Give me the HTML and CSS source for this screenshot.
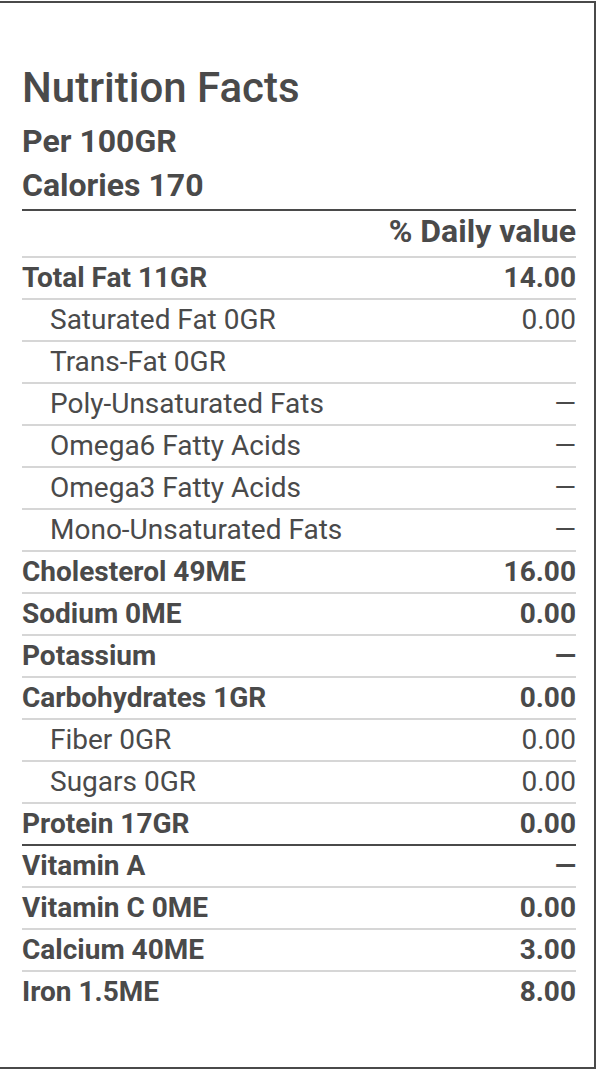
FILE: index.html
```
<!DOCTYPE html>
<html lang="en">
<head>
    <meta charset="UTF-8">
    <meta name="viewport" content="width=device-width, initial-scale=1.0">
    <title>Nutrition Facts</title>
    <link rel="stylesheet" href="styles.css">
</head>
<body>
    <div class="label">
        <h1 class="title">Nutrition Facts</h1>
        <div class="sub">Per 100GR</div>
        <div class="sub">Calories 170</div>

        <div class="facts">
            <div class="row head"><span></span><span>% Daily value</span></div>
            <div class="row main"><span>Total Fat 11GR</span><span>14.00</span></div>
            <div class="row child"><span>Saturated Fat 0GR</span><span>0.00</span></div>
            <div class="row child"><span>Trans-Fat 0GR</span><span></span></div>
            <div class="row child"><span>Poly-Unsaturated Fats</span><span>&mdash;</span></div>
            <div class="row child"><span>Omega6 Fatty Acids</span><span>&mdash;</span></div>
            <div class="row child"><span>Omega3 Fatty Acids</span><span>&mdash;</span></div>
            <div class="row child"><span>Mono-Unsaturated Fats</span><span>&mdash;</span></div>
            <div class="row main"><span>Cholesterol 49ME</span><span>16.00</span></div>
            <div class="row main"><span>Sodium 0ME</span><span>0.00</span></div>
            <div class="row main"><span>Potassium</span><span>&mdash;</span></div>
            <div class="row main"><span>Carbohydrates 1GR</span><span>0.00</span></div>
            <div class="row child"><span>Fiber 0GR</span><span>0.00</span></div>
            <div class="row child"><span>Sugars 0GR</span><span>0.00</span></div>
            <div class="row main"><span>Protein 17GR</span><span>0.00</span></div>
            <div class="row main divider"><span>Vitamin A</span><span>&mdash;</span></div>
            <div class="row main"><span>Vitamin C 0ME</span><span>0.00</span></div>
            <div class="row main"><span>Calcium 40ME</span><span>3.00</span></div>
            <div class="row main"><span>Iron 1.5ME</span><span>8.00</span></div>
        </div>
    </div>
</body>
</html>
```

FILE: styles.css
```
body {
    margin: 0;
    padding: 0;
    font-family: Roboto, "Liberation Sans", sans-serif;
    color: #4a4a4a;
    background-color: #fff;
}

.label {
    box-sizing: border-box;
    width: 596px;
    height: 1068px;
    margin-top: 1px;
    padding: 63px 18px 0 22px;
    border: 2px solid #4a4a4a;
    border-left: none;
}

.title {
    margin: 0 0 9px;
    font-size: 42px;
    font-weight: 500;
    line-height: 44px;
}

.sub {
    font-size: 32px;
    font-weight: 700;
    line-height: 44px;
}

.facts {
    margin-top: 2px;
    border-top: 2px solid #4a4a4a;
}

.row {
    display: flex;
    justify-content: space-between;
    font-size: 28px;
    line-height: 40px;
    border-top: 2px solid #d6d6d6;
}

.row.head {
    border-top: none;
    padding: 0 0 5px;
    font-size: 32px;
    font-weight: 700;
}

.row.main {
    font-weight: 700;
}

.row.child {
    padding-left: 28px;
}

.row.divider {
    border-top-color: #4a4a4a;
}
```
